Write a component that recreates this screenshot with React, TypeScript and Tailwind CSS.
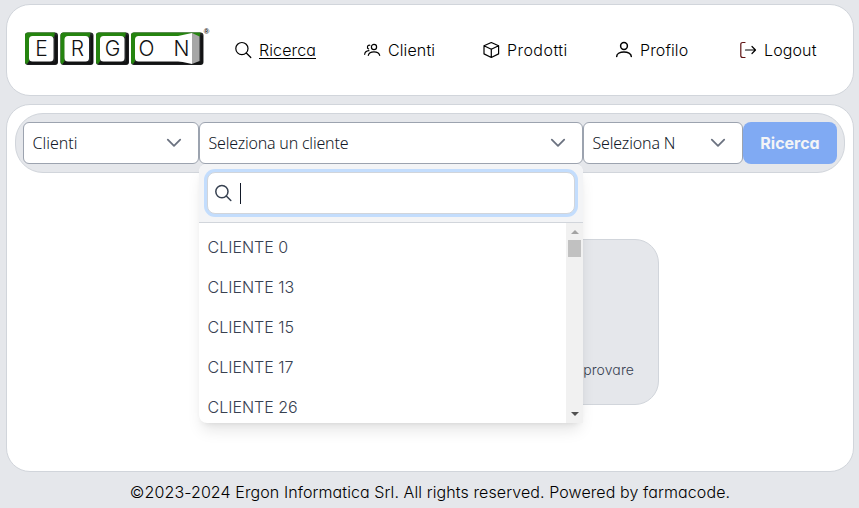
import type { ReactNode } from "react";

const fontUi = "font-['Inter',sans-serif] [font-feature-settings:'cv11']";

function Key({ x, w, letter, lx }: { x: number; w: number; letter: string; lx: number }) {
  const r = x + w;
  return (
    <g>
      <rect x={x} y="0.5" width={w} height="32.5" rx="3" fill="#26292a" />
      <path d={`M${x + 4} 29.500L${r - 3} 29.500L${r - 3} 3L${r - 0.5} 4V30Q${r - 0.5} 32.500 ${r - 3} 32.500H${x + 2}Z`} fill="#121314" />
      <path d={`M${x} 30V3.500Q${x} .5 ${x + 3} .5H${r - 3}L${r - 4} 5H${x + 5}L${x + 4} 29L${x + 2} 32Q${x} 32 ${x} 30Z`} fill="#25840f" />
      <rect x={x + 4} y="4" width={w - 8.5} height="25.500" rx="3.500" fill="#fff" />
      <text x={lx} y="24.300" fontSize="21" fill="#111" textAnchor="middle" className="font-['Inter',sans-serif] font-light">
        {letter}
      </text>
    </g>
  );
}

function Logo() {
  return (
    <svg width="190" height="42" viewBox="0 -8 190 42" className="block shrink-0">
      <Key x={0} w={33} letter="E" lx={16.5} />
      <Key x={35.5} w={33} letter="R" lx={52.3} />
      <Key x={71} w={33} letter="G" lx={87.5} />
      <Key x={106} w={72.5} letter="O" lx={121.5} />
      <path d="M153 4L167 1V32L153 29Z" fill="#fff" />
      <path d="M167 1L174.500 4.500V29L167 32Z" fill="#a6a6a6" />
      <text x="156.500" y="24.300" fontSize="21" fill="#111" textAnchor="middle" className="font-['Inter',sans-serif] font-light">N</text>
      <text x="181.500" y="2" fontSize="7.500" fontWeight="700" fill="#111" textAnchor="middle" className="font-['Liberation_Sans',sans-serif]">®</text>
    </svg>
  );
}

function Icon({ children, w = "1.2" }: { children: ReactNode; w?: string }) {
  return (
    <svg width="18" height="18" viewBox="0 0 18 18" fill="none" stroke="currentColor" strokeWidth={w} strokeLinecap="round" strokeLinejoin="round" className="shrink-0">
      {children}
    </svg>
  );
}

function SearchGlyph() {
  return (
    <>
      <circle cx="7.900" cy="7.600" r="6.100" />
      <path d="M12.300 12L16.800 16.500" />
    </>
  );
}

function Chevron() {
  return (
    <svg width="16" height="10" viewBox="0 0 16 10" fill="none" stroke="#6b7280" strokeWidth="1.800" strokeLinecap="round" strokeLinejoin="round">
      <path d="M1.800 1.700L8 7.900L14.200 1.700" />
    </svg>
  );
}

function Select({ label, className, textClass }: { label: string; className: string; textClass: string }) {
  return (
    <div className={`flex h-[42px] items-center justify-between rounded-md border border-[#9ca3af] bg-white pr-4 pl-2 font-['Noto_Sans',sans-serif] text-base font-[350] text-[#111827] ${className}`}>
      <span className={`whitespace-nowrap ${textClass}`}>{label}</span>
      <Chevron />
    </div>
  );
}

const clients = ["CLIENTE 0", "CLIENTE 13", "CLIENTE 15", "CLIENTE 17", "CLIENTE 26"];

function Dropdown() {
  return (
    <div className="absolute top-[42px] left-0 z-10 w-[384px] rounded-lg bg-white shadow-lg">
      <div className="rounded-t-lg border-b border-[#d1d5db] bg-[#f3f4f6] p-2">
        <div className="flex h-[42px] items-center rounded-lg border border-[#d1d5db] bg-white pl-1.5 text-[#374151] ring-3 ring-[#c3ddfd]">
          <Icon w="1.5"><SearchGlyph /></Icon>
          <span className="ml-2 h-[21px] w-px bg-[#111827]" />
        </div>
      </div>
      <div className="flex h-[200px] overflow-hidden rounded-bl-lg">
        <ul className="flex-1 pt-1">
          {clients.map((c) => (
            <li key={c} className="flex h-10 items-center pl-[8.5px] text-base text-[#374151]">{c}</li>
          ))}
        </ul>
        <div className="flex w-[17px] flex-col items-center justify-between bg-[#f1f1f1] pt-[7px] pb-[7px]">
          <div className="flex flex-col items-center gap-[6px]">
            <svg width="8" height="4" viewBox="0 0 8 4"><path d="M0 4L4 0L8 4Z" fill="#a3a3a3" /></svg>
            <div className="h-[17px] w-[13px] bg-[#c1c1c1]" />
          </div>
          <svg width="8" height="4" viewBox="0 0 8 4"><path d="M0 0L4 4L8 0Z" fill="#505050" /></svg>
        </div>
      </div>
    </div>
  );
}

function NavItem({ icon, label, className, textClass = "" }: { icon: ReactNode; label: string; className: string; textClass?: string }) {
  return (
    <a className={`flex shrink-0 items-center gap-[7px] ${className}`}>
      {icon}
      <span className={`whitespace-nowrap ${textClass}`}>{label}</span>
    </a>
  );
}

export default function App() {
  return (
    <div className={`flex h-[508px] w-[859px] flex-col overflow-hidden bg-[#e5e7eb] pt-1 pr-[5px] pl-1.5 text-base font-[350] text-black ${fontUi}`}>
      <header className="flex h-[92px] shrink-0 items-center rounded-3xl border border-[#d1d5db] bg-white pl-[18px]">
        <div className="w-[209px] shrink-0 pb-2.5"><Logo /></div>
        <nav className="flex items-center">
          <NavItem className="w-[129px]" textClass="tracking-[0.12px] underline underline-offset-2" label="Ricerca" icon={<Icon><SearchGlyph /></Icon>} />
          <NavItem
            className="w-[119px]"
            textClass="tracking-[0.12px]"
            label="Clienti"
            icon={
              <Icon>
                <circle cx="11" cy="6" r="2.600" />
                <path d="M5.300 14.300C6.300 9.700 15.600 9.700 16.700 14.300M6.800 4.300C4.400 3.500 3.500 7.200 5.600 8M1.700 13.300C1.900 11.100 3.100 10 5.900 9.700" />
              </Icon>
            }
          />
          <NavItem
            className="w-[133px]"
            textClass="tracking-[0.45px]"
            label="Prodotti"
            icon={<Icon><path d="M9.300 1.500L16.600 4.700V12.900L9.300 16.500L2 12.900V4.700ZM2 4.700L9.300 8.200L16.600 4.700M9.300 8.200V16.500" /></Icon>}
          />
          <NavItem
            className="w-[124px]"
            textClass="tracking-[0.12px]"
            label="Profilo"
            icon={<Icon w="1.500"><circle cx="9" cy="5" r="3.400" /><path d="M1.700 15.500C1.700 9.600 16.300 9.600 16.300 15.500" /></Icon>}
          />
          <NavItem
            className=""
            textClass="tracking-[0.12px]"
            label="Logout"
            icon={
              <Icon>
                <path stroke="#5f1414" d="M6 1.500H3.800Q1.800 1.500 1.800 3.200V14.800Q1.800 16.500 3.800 16.500H6" />
                <path d="M6.500 9H16.500M13 5.500L16.500 9L13 12.500" />
              </Icon>
            }
          />
        </nav>
      </header>

      <main className="mt-2 h-[368px] shrink-0 rounded-3xl border border-[#d1d5db] bg-white p-2">
        <div className="flex h-[60px] rounded-[28px] border border-[#d1d5db] bg-[#e5e7eb] px-[7px] py-2">
          <Select className="w-[176px]" textClass="pl-[0.5px]" label="Clienti" />
          <div className="relative w-[384px]">
            <Select className="w-full" textClass="pl-[0.5px] tracking-[-0.2px]" label="Seleziona un cliente" />
            <Dropdown />
          </div>
          <Select className="w-[160px]" textClass="pl-[0.5px] tracking-[-0.15px]" label="Seleziona N" />
          <button className="h-[42px] w-[94px] rounded-lg bg-[#80aaf3] text-base font-bold text-[#f3f4f6]">Ricerca</button>
        </div>
        <section className="mx-auto mt-[66px] flex h-[166px] w-[458px] items-end justify-end rounded-3xl border border-[#d1d5db] bg-[#e5e7eb] pr-6 pb-6 text-sm tracking-[0.1px] text-[#374151]">
          <p>provare</p>
        </section>
      </main>

      <footer className="flex flex-1 items-center justify-center pt-1 pb-px tracking-[0.095px] whitespace-nowrap">
        <p>©2023-2024 Ergon Informatica Srl. All rights reserved. Powered by farmacode.</p>
      </footer>
    </div>
  );
}
